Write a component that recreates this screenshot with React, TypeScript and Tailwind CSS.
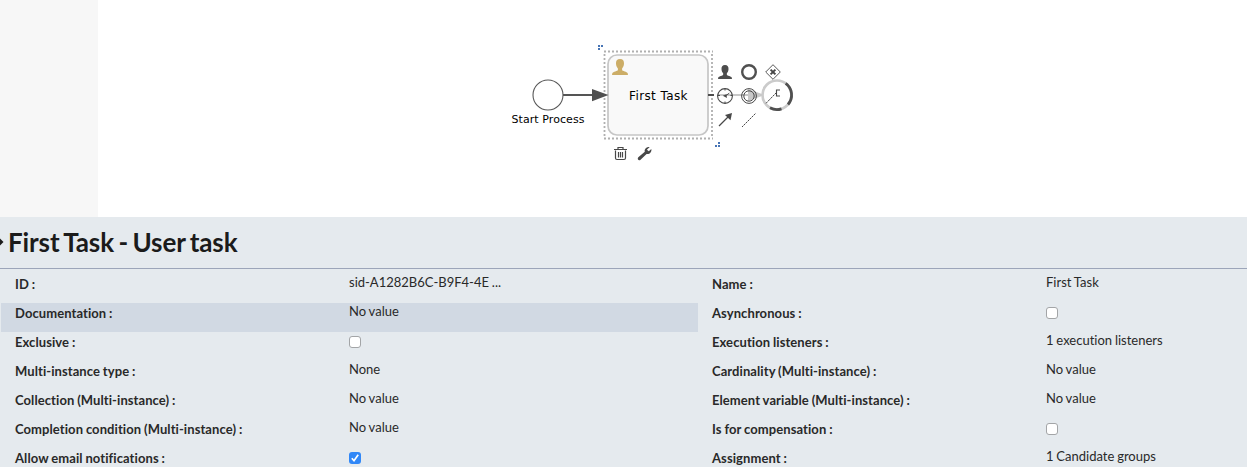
import React from "react";

type Value = string | boolean;
type Property = { label: string; value: Value; active?: boolean };

const left: Property[] = [
  { label: "ID", value: "sid-A1282B6C-B9F4-4E ..." },
  { label: "Documentation", value: "No value", active: true },
  { label: "Exclusive", value: false },
  { label: "Multi-instance type", value: "None" },
  { label: "Collection (Multi-instance)", value: "No value" },
  { label: "Completion condition (Multi-instance)", value: "No value" },
  { label: "Allow email notifications", value: true },
];

const right: Property[] = [
  { label: "Name", value: "First Task" },
  { label: "Asynchronous", value: false },
  { label: "Execution listeners", value: "1 execution listeners" },
  { label: "Cardinality (Multi-instance)", value: "No value" },
  { label: "Element variable (Multi-instance)", value: "No value" },
  { label: "Is for compensation", value: false },
  { label: "Assignment", value: "1 Candidate groups" },
];

const person =
  "M8 0C5 0 3.8 2 4 4.8C4.1 7 5 8.4 5.9 9.4V11C5.7 12.2 1 12.6 0.3 14.2L0 16H16L15.7 14.2C15 12.6 10.3 12.2 10.1 11V9.4C11 8.4 11.9 7 12 4.8C12.2 2 11 0 8 0Z";

function Checkbox({ checked, label }: { checked: boolean; label: string }) {
  return (
    <span
      role="checkbox"
      aria-checked={checked}
      aria-label={label}
      className={
        checked
          ? "mt-[4px] flex size-3 items-center justify-center rounded-[3px] bg-[#3087f7]"
          : "mt-[4px] flex size-3 rounded-[3px] border border-[#a3a5a7] bg-white"
      }
    >
      {checked && (
        <svg viewBox="0 0 12 12" className="size-3" fill="none" stroke="white" strokeWidth="1.7">
          <path d="M2.8 6.3L5 8.7L9.2 2.8" />
        </svg>
      )}
    </span>
  );
}

function Column({ items }: { items: Property[] }) {
  return (
    <div className="flex flex-col">
      {items.map(({ label, value, active }) => (
        <div
          key={label}
          className={
            active
              ? "grid h-[29px] shrink-0 grid-cols-[334px_1fr] bg-[#d1d9e3] pl-[14px]"
              : "grid h-[29px] shrink-0 grid-cols-[334px_1fr] pl-[14px]"
          }
        >
          <span className="text-[13px] leading-[21px] font-bold tracking-[0.08px] [word-spacing:-0.4px]">{label} :</span>
          {typeof value === "boolean" ? (
            <Checkbox checked={value} label={label} />
          ) : (
            <span className="-mt-[2px] text-[13px] leading-[21px] [word-spacing:-0.5px]">{value}</span>
          )}
        </div>
      ))}
    </div>
  );
}

function Diagram() {
  return (
    <svg viewBox="98 0 1149 217" className="h-[217px] w-[1149px] bg-white">
      <rect x="608" y="55" width="100" height="80" rx="9" fill="#f9f9f9" stroke="#c6c6c6" strokeWidth="1.7" />
      <path d="M604 51.5H713M604 138.5H713M604.5 54V138M712 54V138" stroke="#b0b0b0" strokeWidth="1.8" strokeDasharray="2 2" />

      <circle cx="548" cy="95" r="15" fill="white" stroke="#585858" strokeWidth="1.1" />
      <path d="M563 95H594" stroke="#555555" strokeWidth="2" />
      <path d="M592 89L608.5 95L592 101.3Z" fill="#505050" />
      <text x="511.5" y="123" textLength="73" className="font-['DejaVu_Sans',sans-serif] text-[11px]">
        Start Process
      </text>

      <path d={person} transform="translate(612 59)" fill="#ccad67" />
      <text x="629" y="100" textLength="58.5" className="font-['DejaVu_Sans',sans-serif] text-[12px]">
        First Task
      </text>
      <path d="M598 45h2v2h-2zM601 45h2v2h-2zM598 48h2v2h-2zM718 142h2v2h-2zM715 145h2v2h-2zM718 145h2v2h-2z" fill="#4774b5" />

      <path d="M717 95H752" stroke="#c8c8c8" strokeWidth="2" />
      <path d="M708 95H714" stroke="#4d4d4d" strokeWidth="2" />
      <path d="M748 89L765 95L748 101Z" fill="#c8c8c8" />
      <circle cx="777" cy="95" r="14.5" fill="white" stroke="#cbcbcb" strokeWidth="2.7" />
      <path d="M785.7 83.3A14.5 14.5 0 0 1 788 104.5M781.5 108.8A14.5 14.5 0 0 1 770 107.8" fill="none" stroke="#505050" strokeWidth="2.8" />

      <path d={person} transform="translate(718 65) scale(.875)" fill="#4d4d4d" />
      <circle cx="749" cy="72" r="6.8" fill="none" stroke="#505050" strokeWidth="2.4" />
      <path d="M773 64.7L780.3 72L773 79.3L765.7 72Z" fill="white" stroke="#585858" />
      <path d="M770.6 69.6L775.4 74.4M775.4 69.6L770.6 74.4" stroke="#484848" strokeWidth="2" />

      <g fill="none" stroke="#484848">
        <circle cx="725" cy="96" r="7.4" strokeWidth="1.1" />
        <path d="M725 88.5V90.5M725 101.5V103.5M717.5 95.5H720M730.5 95.5H732.5" />
        <path d="M725.5 95.8L729.3 93.2" />
        <path d="M722.8 95.7L726.5 94.3L726.9 97.9Z" fill="#484848" stroke="none" />
        <circle cx="749" cy="96" r="7.4" />
        <circle cx="749" cy="96" r="5.2" />
        <path d="M766 103.3L776.3 92.7" strokeDasharray="2.5 .7" />
        <path d="M780 90H776.5V96H780" strokeWidth="1.1" />
        <path d="M719 126L728.5 116.5" strokeWidth="1.2" />
        <path d="M732 113L730.5 120.3L725 115Z" fill="#484848" stroke="none" />
        <path d="M742 127L756 113" strokeDasharray="2 .8" />
      </g>

      <path
        d="M614 149.5H627M618 149V147.5H623V149M615.5 150.5V158Q615.5 159.5 617 159.5H624Q625.5 159.5 625.5 158V150.5M618.5 152V157.5M620.5 152V157.5M622.5 152V157.5"
        fill="none"
        stroke="#484848"
        strokeWidth="1.2"
      />
      <path d="M649.7 147C646.7 146.5 644 149 644.8 151.7L638.3 157.3C636.8 158.7 638.7 161.2 640.3 159.9L646.6 154C649.6 154.6 652 151.9 651.3 149L648.8 151.2L646.9 149.7Z" fill="#484848" />
    </svg>
  );
}

export default function App() {
  return (
    <div className="flex h-[467px] w-[1247px] flex-col overflow-hidden bg-[#e5eaee] font-['Lato',sans-serif] text-[#292929] [font-variant-ligatures:none]">
      <div className="flex h-[217px] shrink-0">
        <aside className="w-[98px] shrink-0 bg-[#f7f7f7]" />
        <Diagram />
      </div>
      <header className="flex h-[52px] shrink-0 items-center border-b border-[#9ca5b9] pb-[2px]">
        <svg viewBox="0 0 8 10" className="h-[10px] w-2 shrink-0" fill="#1d1d1d">
          <path d="M0 1.5L3.5 5L0 8.5Z" />
        </svg>
        <h1 className="text-[26px] leading-8 font-bold tracking-[-0.12px] text-[#1b1b1b] [word-spacing:-1.7px]">
          First Task - User task
        </h1>
      </header>
      <main className="grid grid-cols-[697px_549px] pt-[5px] pl-px">
        <Column items={left} />
        <Column items={right} />
      </main>
    </div>
  );
}
